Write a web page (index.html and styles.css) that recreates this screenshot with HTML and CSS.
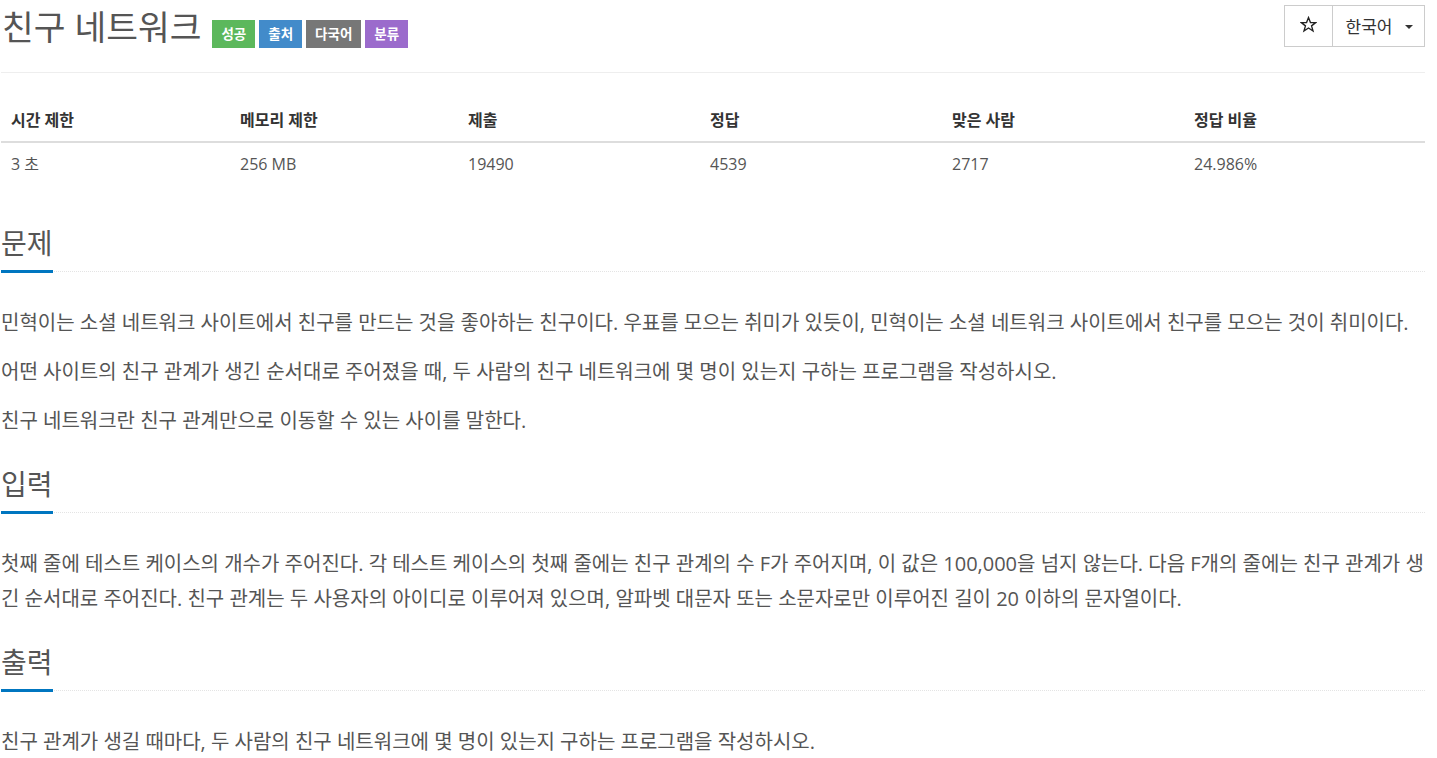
FILE: index.html
```html
<!DOCTYPE html>
<html lang="ko">
<head>
<meta charset="utf-8">
<title>친구 네트워크</title>
<link rel="stylesheet" href="styles.css">
</head>
<body>
<div class="page">
  <div class="page-header">
    <div class="title-wrap">
      <h1 class="title">친구 네트워크</h1>
      <span class="badge badge-success">성공</span>
      <span class="badge badge-source">출처</span>
      <span class="badge badge-multi">다국어</span>
      <span class="badge badge-tag">분류</span>
    </div>
    <div class="btn-group">
      <button class="btn btn-star" aria-label="즐겨찾기">
        <svg class="star" viewBox="0 0 20 20" width="17" height="17"><polygon points="10,1.8 12.3,7.6 18.4,7.8 13.6,11.6 15.3,17.6 10,14.1 4.7,17.6 6.4,11.6 1.6,7.8 7.7,7.6" fill="none" stroke="#222" stroke-width="1.6" stroke-linejoin="miter"/></svg>
      </button>
      <button class="btn btn-lang">한국어 <span class="caret"></span></button>
    </div>
  </div>

  <div class="info">
    <div class="info-head">
      <div class="cell">시간 제한</div>
      <div class="cell">메모리 제한</div>
      <div class="cell">제출</div>
      <div class="cell">정답</div>
      <div class="cell">맞은 사람</div>
      <div class="cell">정답 비율</div>
    </div>
    <div class="info-row">
      <div class="cell">3 초 </div>
      <div class="cell">256 MB</div>
      <div class="cell">19490</div>
      <div class="cell">4539</div>
      <div class="cell">2717</div>
      <div class="cell">24.986%</div>
    </div>
  </div>

  <section class="section">
    <div class="headline"><h2>문제</h2></div>
    <div class="text">
      <p>민혁이는 소셜 네트워크 사이트에서 친구를 만드는 것을 좋아하는 친구이다. 우표를 모으는 취미가 있듯이, 민혁이는 소셜 네트워크 사이트에서 친구를 모으는 것이 취미이다.</p>
      <p>어떤 사이트의 친구 관계가 생긴 순서대로 주어졌을 때, 두 사람의 친구 네트워크에 몇 명이 있는지 구하는 프로그램을 작성하시오.</p>
      <p>친구 네트워크란 친구 관계만으로 이동할 수 있는 사이를 말한다.</p>
    </div>
  </section>

  <section class="section">
    <div class="headline"><h2>입력</h2></div>
    <div class="text">
      <p>첫째 줄에 테스트 케이스의 개수가 주어진다. 각 테스트 케이스의 첫째 줄에는 친구 관계의 수 F가 주어지며, 이 값은 100,000을 넘지 않는다. 다음 F개의 줄에는 친구 관계가 생긴 순서대로 주어진다. 친구 관계는 두 사용자의 아이디로 이루어져 있으며, 알파벳 대문자 또는 소문자로만 이루어진 길이 20 이하의 문자열이다.</p>
    </div>
  </section>

  <section class="section">
    <div class="headline"><h2>출력</h2></div>
    <div class="text">
      <p>친구 관계가 생길 때마다, 두 사람의 친구 네트워크에 몇 명이 있는지 구하는 프로그램을 작성하시오.</p>
    </div>
  </section>
</div>
</body>
</html>
```

FILE: styles.css
```css
* { box-sizing: border-box; }

html, body {
  margin: 0;
  padding: 0;
  background: #fff;
}

body {
  font-family: "Open Sans", "Noto Sans CJK KR", sans-serif;
  color: #555;
  overflow: hidden;
}

.page {
  width: 1424px;
  margin-left: 1px;
}

/* header */
.page-header {
  display: flex;
  justify-content: space-between;
  align-items: flex-start;
  padding-top: 5px;
  height: 73px;
  border-bottom: 1px solid #eee;
}

.title-wrap {
  display: flex;
  align-items: flex-start;
  gap: 4px;
}

.title {
  margin: 0 7px 0 1px;
  font-size: 34.5px;
  line-height: 44px;
  font-weight: 400;
  color: #555;
}

.badge {
  margin-top: 15px;
  height: 28px;
  line-height: 28px;
  padding: 0 9px;
  font-size: 13.5px;
  font-weight: 700;
  color: #fff;
}

.badge-success { background: #5cb85c; }
.badge-source { background: #428bca; }
.badge-multi { background: #777; }
.badge-tag { background: #9b6bcc; }

.btn-group {
  display: flex;
}

.btn {
  height: 42px;
  margin: 0;
  background: #fff;
  border: 1px solid #ccc;
  font-family: "Open Sans", "Noto Sans CJK KR", sans-serif;
  color: #333;
  padding: 0;
  display: flex;
  align-items: center;
  justify-content: center;
}

.btn-star {
  width: 49px;
  padding-bottom: 3px;
}

.star {
  display: block;
}

.btn-lang {
  width: 93px;
  margin-left: -1px;
  font-size: 17px;
  gap: 13px;
  padding-left: 2px;
  padding-bottom: 2px;
}

.caret {
  width: 0;
  height: 0;
  border-left: 4px solid transparent;
  border-right: 4px solid transparent;
  border-top: 4px solid #333;
  margin-top: 4px;
}

/* info table */
.info {
  margin-top: 28px;
}

.info-head,
.info-row {
  display: grid;
  grid-template-columns: 229px 228px 242px 242px 242px 1fr;
}

.info-head {
  border-bottom: 2px solid #ddd;
}

.info-head .cell {
  padding: 7px 10px 9px;
  line-height: 24px;
  font-size: 16px;
  font-weight: 700;
  color: #333;
}

.info-row .cell {
  padding: 9px 10px 11px;
  line-height: 24px;
  font-size: 16px;
  color: #555;
}

/* sections */
.section {
  margin-top: 39px;
}

.section + .section {
  margin-top: 29px;
}

.headline {
  border-bottom: 1px dotted #e4e4e4;
  display: flex;
}

.headline h2 {
  margin: 0 0 -2px 0;
  padding-bottom: 10px;
  font-size: 28px;
  line-height: 34px;
  font-weight: 400;
  color: #555;
  border-bottom: 3px solid #0076c0;
}

.text {
  padding-top: 33px;
}

.text p {
  margin: 0 0 14px;
  font-size: 20px;
  line-height: 35px;
  color: #555;
}
```
